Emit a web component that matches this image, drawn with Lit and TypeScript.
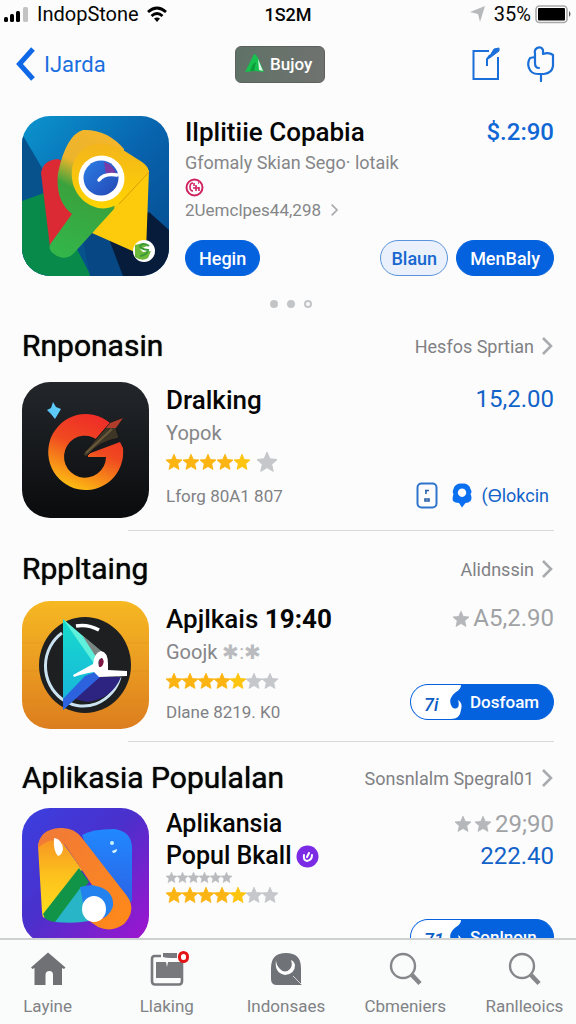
import { LitElement, html, css, nothing, TemplateResult } from "lit";
import { customElement, property } from "lit/decorators.js";
import { classMap } from "lit/directives/class-map.js";

const reset = css`
  * { box-sizing: border-box; }
  svg { display: block; flex: none; }
  button {
    font: inherit; color: inherit; background: none; border: 0; padding: 0; margin: 0;
    cursor: pointer;
  }
  a { color: inherit; text-decoration: none; }
  h1, h2, h3, p { margin: 0; font-weight: inherit; font-size: inherit; }
`;

const STAR = "M10 .8 12.700 7l6.800.600-5.100 4.500 1.500 6.700L10 15.300l-5.900 3.500 1.500-6.700L.5 7.600 7.300 7z";

const star = (color: string, size: number) => html`
  <svg width=${size} height=${size} viewBox="0.5 0.5 19 19" aria-hidden="true"><path fill=${color} stroke=${color} stroke-width="1" stroke-linejoin="round" d=${STAR} /></svg>`;

const chevron = (size: number) => html`
  <svg width=${size} height=${size} viewBox="0 0 18 18" aria-hidden="true">
    <path d="M7 1l8 8-8 8" fill="none" stroke="#a9abae" stroke-width="2.600" />
  </svg>`;

const searchArt = html`
  <svg width="36" height="36" viewBox="0 0 36 36" fill="none" stroke="#85878a" aria-hidden="true">
    <circle cx="16" cy="15" r="12" stroke-width="2.400" />
    <path d="M25 24l8 8.500" stroke-width="4.500" />
  </svg>`;

const compassArt = html`
  <svg viewBox="0 0 147 160" width="147" height="160" aria-hidden="true">
    <defs>
      <linearGradient id="sky" x1="0" y1="0" x2="1" y2="1"><stop offset="0" stop-color="#0b95cf" /><stop offset=".5" stop-color="#0863ad" /><stop offset="1" stop-color="#054a8c" /></linearGradient>
      <linearGradient id="gold" x1="0" y1="0" x2="0" y2="1"><stop offset="0" stop-color="#f3b41c" /><stop offset="1" stop-color="#ffd500" /></linearGradient>
      <linearGradient id="leaf" x1="0.600" y1="0" x2="0.300" y2="1"><stop offset="0" stop-color="#f3b52c" /><stop offset=".3" stop-color="#ebb42c" /><stop offset=".5" stop-color="#3aa23d" /><stop offset="1" stop-color="#33b54a" /></linearGradient>
      <linearGradient id="blue" x1="0" y1="0" x2="1" y2="1"><stop offset="0" stop-color="#2a7de6" /><stop offset="1" stop-color="#2548b4" /></linearGradient>
    </defs>
    <rect width="147" height="160" fill="url(#sky)" />
    <path d="M0 18l26 44 60 98H0z" fill="#07528c" />
    <path d="M0 85l25-9 44 84H0z" fill="#078a4a" />
    <path d="M60 120l42-20 10 60H68z" fill="#074884" />
    <path d="M85 118l42-22 20 18v46h-46z" fill="#071c3a" />
    <path d="M19 57q2-13 17-14l20 10 10 60-38 18z" fill="#dc2a35" />
    <path d="M127 54l-3 82q-4 4-9 1L70 117l28-36z" fill="#fdcb0b" />
    <path d="M61 14q24-1 41 19L92 93 52 137q-9 9-20 1-7-5-3-11l21-29Q33 85 36 57 44 19 61 14z" fill="url(#leaf)" />
    <path d="M127 56q-1-6-7-10L98 32Q75 22 60 34 46 48 51 68q6 19 25 24 12 2 21-5z" fill="url(#gold)" />
    <path d="M127 56L97 88" stroke="#d99d06" stroke-width="1" />
    <circle cx="79.500" cy="62.500" r="23" fill="#fff" />
    <circle cx="79" cy="62" r="17.500" fill="url(#blue)" />
    <path d="M82 46q9 2 12 12l-10 1z" fill="#793ba6" />
    <path d="M77 64q5-7 18-5" fill="none" stroke="#fff" stroke-width="3.500" stroke-linecap="round" />
    <circle cx="122" cy="135" r="11" fill="#fff" />
    <path d="M113 129l8-2 4 3-7 3 3 3 8-1-3 7q-6 4-13-1z" fill="#6cb83a" />
    <path d="M127 130q-6-4-9 0 0 3 8 4-1 5-8 6" fill="none" stroke="#3d9a38" stroke-width="2" />
  </svg>`;

const ringArt = html`
  <svg viewBox="0 0 127 136" width="127" height="136" aria-hidden="true">
    <defs>
      <linearGradient id="night" x1="0" y1="0" x2="0" y2="1"><stop offset="0" stop-color="#23272b" /><stop offset="1" stop-color="#0a0b0d" /></linearGradient>
      <linearGradient id="fire" x1="0.700" y1="0" x2="0.300" y2="1"><stop offset="0" stop-color="#ee2a28" /><stop offset=".45" stop-color="#f04a20" /><stop offset=".95" stop-color="#fcb813" /></linearGradient>
    </defs>
    <rect width="127" height="136" fill="url(#night)" />
    <path d="M31 20l3 5 5 2-3 5-3 5-4-5-4-4 4-2z" fill="#5cc9f7" />
    <path d="M91 44A37.500 38 0 1 0 101 66L98 60 66 72V75H84A21 21 0 1 1 78 60z" fill="url(#fire)" />
    <path d="M61 72L88 41l13-5-7 10 3 10Q76 60 66 73q-3 3-5-1z" fill="#3d3526" stroke="#16161a" stroke-width="1" />
    <path d="M88 41l13-5-7 10-10 0z" fill="#b03c2c" />
    <path d="M64 71l26-24" fill="none" stroke="#6b5a3a" stroke-width="2" />
  </svg>`;

const playArt = html`
  <svg viewBox="0 0 127 128" width="127" height="128" aria-hidden="true">
    <defs>
      <linearGradient id="wood" x1="0" y1="0" x2="0" y2="1"><stop offset="0" stop-color="#f6b822" /><stop offset=".5" stop-color="#ea9c22" /><stop offset="1" stop-color="#dc7d1e" /></linearGradient>
      <linearGradient id="teal" x1="0" y1="0" x2="0" y2="1"><stop offset="0" stop-color="#17dccc" /><stop offset="1" stop-color="#18b0dc" /></linearGradient>
    </defs>
    <rect width="127" height="128" fill="url(#wood)" />
    <path d="M0 42h127M0 70h127M0 100h127" stroke="#d98918" stroke-width="1" opacity=".35" />
    <ellipse cx="63" cy="64" rx="46" ry="48" fill="#1d1f21" />
    <path d="M40 32a38 40 0 1 0 58 44" fill="none" stroke="#cbe3f1" stroke-width="3" />
    <path d="M54 25q12-2 23 4" fill="none" stroke="#fff" stroke-width="3.500" />
    <path d="M66 76h33q-9 22-34 25l-16-4z" fill="#2c2480" />
    <path d="M41 18v91l35-33 4-22z" fill="url(#teal)" />
    <path d="M41 18l40 34-10 9z" fill="#5ff0dc" />
    <path d="M60 34l24 20-10 2z" fill="#7a8582" />
    <path d="M41 109V98l22-23 10-4 5 5z" fill="#2d62df" />
    <path fill-rule="evenodd" d="M51 74L71 63q1-11 8-13 7 1 7 13v6l19 1v5l-28 1-5-5q-12 2-20 5zM77 66q6-3 3-9-5 1-3 9z" fill="#fff" />
    <path d="M77 66q-2-8 3-9 4 4-1 9z" fill="#7b1842" />
  </svg>`;

const ribbonArt = html`
  <svg viewBox="0 0 127 136" width="127" height="136" aria-hidden="true">
    <defs>
      <linearGradient id="violet" x1="0" y1="0" x2="1" y2="1"><stop offset="0" stop-color="#3b3fe0" /><stop offset=".45" stop-color="#4a30cc" /><stop offset="1" stop-color="#a313cf" /></linearGradient>
      <linearGradient id="orange" x1="0" y1="0" x2="1" y2="1"><stop offset="0" stop-color="#f0793a" /><stop offset="1" stop-color="#ff8a17" /></linearGradient>
      <linearGradient id="azure" x1="0" y1="0" x2="0" y2="1"><stop offset="0" stop-color="#2188ff" /><stop offset="1" stop-color="#2b62e4" /></linearGradient>
      <linearGradient id="sun" x1="0" y1="0" x2="0" y2="1"><stop offset="0" stop-color="#f58a25" /><stop offset=".5" stop-color="#fcc01d" /><stop offset="1" stop-color="#ffdf1b" /></linearGradient>
    </defs>
    <rect width="127" height="136" fill="url(#violet)" />
    <path d="M60 27q10-6 32-6 17 2 18 18v54l-6 4-40-60z" fill="url(#azure)" />
    <path d="M16 38q2-14 16-16l28 40-38 48q-2-2-2-6z" fill="url(#sun)" />
    <path d="M21 106L57 60l10 14-32 40q-12 0-14-8z" fill="#119447" />
    <path d="M33 114l26-35h16l-8 34q-14 3-34 1z" fill="#28b5c8" />
    <path d="M58 79q22-6 32 6 6 12-2 24l-24 2z" fill="#2482ee" />
    <path d="M16 40Q17 21 38 20q14-1 22 10l45 58q10 14-3 28-12 9-26 3l-10-7q20 2 25-14 1-14-13-19l-8-2L43 37q-12-11-27 3z" fill="url(#orange)" />
    <path d="M32 30q8 1 9 11-1 6-5 7-5-5-4-18z" fill="#fff" />
    <ellipse cx="72" cy="101" rx="12" ry="13" fill="#fff" />
    <circle cx="90" cy="35" r="2" fill="#c8f2ff" />
    <path d="M90 43l5-2q0 4-4 4z" fill="#d8f6ff" />
  </svg>`;

@customElement("app-rating")
class AppRating extends LitElement {
  @property({ type: Number }) filled = 5;
  @property({ type: Number }) total = 7;
  @property({ type: Boolean }) spaced = false;

  static styles = css`
    :host { display: flex; align-items: center; }
    svg { display: block; }
    .wide { padding-right: 1px; }
    .apart { margin-left: 6px; }
  `;

  render() {
    return Array.from({ length: this.total }, (_, i) => {
      const on = i < this.filled;
      const apart = this.spaced && i === this.filled;
      return html`<span class=${classMap({ apart, wide: this.spaced })}>${star(on ? (i > 3 ? "#fdc50f" : "#fbb411") : "#c5c7ca", apart ? 20 : 16)}</span>`;
    });
  }
}

@customElement("split-button")
class SplitButton extends LitElement {
  @property() label = "";
  @property() mark = "";

  static styles = [reset, css`
    :host { display: block; }
    button {
      display: flex; align-items: center; width: 144px; height: 36px; border-radius: 18px;
      border: 1px solid #0562de; background: #0562de; overflow: hidden; color: #fff;
      font-size: 17px; font-weight: 500;
    }
    .left {
      display: grid; align-items: center; justify-items: start; height: 34px; flex: none;
      margin-right: 8px; color: #0b5cc4; font-style: italic;
    }
    .left > * { grid-area: 1 / 1; }
    .mark { padding-left: 13px; padding-top: 4px; font-size: 18px; }
  `];

  render() {
    return html`
      <button type="button">
        <span class="left">
          <svg width="51" height="34" viewBox="0 0 51 34" aria-hidden="true">
            <path d="M0 0h50q0 4-5 7-8 6-5 13 2 5 6 3 3-2 1-8 5 3 3 10-1 9-10 9H0z" fill="#fff" />
          </svg>
          <span class="mark">${this.mark}</span>
        </span>
        ${this.label}
      </button>`;
  }
}

interface Shelf {
  heading: string;
  more: string;
  art: TemplateResult;
  kind: string;
  body: TemplateResult;
  side: TemplateResult;
}

const shelves: Shelf[] = [
  {
    heading: "Rnponasin",
    more: "Hesfos Sprtian",
    art: ringArt,
    kind: "roomy",
    body: html`
      <h3 class="name">Dralking</h3>
      <p class="sub">Yopok</p>
      <app-rating class="rating" filled="5" total="6" spaced></app-rating>
      <p class="meta">Lforg 80A1 807</p>`,
    side: html`
      <p class="price">15,2.00</p>
      <div class="links">
        <svg width="22" height="27" viewBox="0 0 22 27" fill="none" aria-hidden="true">
          <rect x="1.500" y="1.500" width="19" height="24" rx="4" stroke="#2f74cc" stroke-width="2" />
          <path d="M9 8.500h4M10 8v4M9 17h4v2H9z" stroke="#2a5fa8" stroke-width="1.600" />
        </svg>
        <svg width="20" height="25" viewBox="0 0 20 25" aria-hidden="true">
          <path fill="#0b70f0" fill-rule="evenodd" d="M10 .5Q17 0 18.500 6q2 3 0 5 2 4 0 7-2 2-5 2l-3.500 4.500L7 20q-4 0-6-2-1-3 0.500-7-1.500-2 0-5Q3 0 10 .5zM10 5.500a4.200 4.200 0 1 0 .1 0z" />
        </svg>
        <a href="#lokasi">(Ɵlokcin</a>
      </div>`,
  },
  {
    heading: "Rppltaing",
    more: "Alidnssin",
    art: playArt,
    kind: "",
    body: html`
      <h3 class="name">Apjlkais <b>19:40</b></h3>
      <p class="sub">Goojk <span class="faint">✱:✱</span></p>
      <app-rating class="rating" filled="5" total="7"></app-rating>
      <p class="meta">Dlane 8219. K0</p>`,
    side: html`
      <p class="price muted">${star("#b5b7ba", 16)} A5,2.90</p>
      <split-button mark="7i" label="Dosfoam"></split-button>`,
  },
  {
    heading: "Aplikasia Populalan",
    more: "Sonsnlalm Spegral01",
    art: ribbonArt,
    kind: "tall",
    body: html`
      <h3 class="name two">Aplikansia<br />
        <span class="verified">Popul Bkall
          <svg width="23" height="23" viewBox="0 0 23 23" aria-hidden="true">
            <circle cx="11.500" cy="11.500" r="11" fill="#7b2be3" />
            <path d="M8 10q-1 5 3 6 5-1 5-6M11 12l2-4" fill="none" stroke="#fff" stroke-width="2" stroke-linecap="round" />
          </svg></span>
      </h3>
      <p class="tiny">${Array.from({ length: 6 }, () => star("#b9bbbe", 11))}</p>
      <app-rating class="rating" filled="5" total="7"></app-rating>`,
    side: html`
      <div>
        <p class="price muted">${star("#b5b7ba", 16)}${star("#b5b7ba", 16)} 29;90</p>
        <p class="price">222.40</p>
      </div>
      <split-button mark="71" label="Sonlnoın"></split-button>`,
  },
];

const tabs: { label: string; art: TemplateResult; alert?: boolean }[] = [
  {
    label: "Layine",
    art: html`<svg width="36" height="36" viewBox="0 0 36 36" aria-hidden="true">
      <path fill="#6f7174" d="M18 1.500l17.500 15-1.500 1.500-2-1V34h-9V24q0-4-3.500-4-4 0-4 4v10H4.500V17l-2 1L1 16.500z" /></svg>`,
  },
  {
    label: "Llaking",
    alert: true,
    art: html`<svg width="36" height="36" viewBox="0 0 36 36" aria-hidden="true">
      <path fill="none" stroke="#77797c" stroke-width="2.600" d="M12 5H5.500Q3 5 3 8v22q0 3.500 3 3.500h24q3 0 3-3.500V10" />
      <path fill="#77797c" d="M14 2h14v5h-6q-5 0-8-1zM7 11h10l1 5 1-5h13v16H7z" /></svg>`,
  },
  {
    label: "Indonsaes",
    art: html`<svg width="36" height="36" viewBox="0 0 36 36" aria-hidden="true">
      <path fill="#6f7276" d="M3 17Q3 2 18 2t15 15v17H9q-6 0-6-6z" />
      <path fill="#fff" d="M8 9Q6 22 17 24q10-1 10-10-1-4-4-5 2 6-1 9-5 5-10 0-4-4-4-9z" />
      <path stroke="#d0d1d2" stroke-width="1" d="M25 25l9 9" /></svg>`,
  },
  { label: "Cbmeniers", art: searchArt },
  { label: "Ranlleoics", art: searchArt },
];

@customElement("app-root")
class AppRoot extends LitElement {
  static styles = [reset, css`
    :host {
      display: flex; flex-direction: column; height: 100vh; overflow: hidden;
      background: #fcfcfc; color: #060606;
      font-family: Roboto, "Liberation Sans", sans-serif; font-size: 18px;
    }
    .status {
      display: grid; grid-template-columns: 1fr auto 1fr; align-items: center; flex: none;
      height: 28px; padding: 0 4px; font-size: 20px;
    }
    .status > div { display: flex; align-items: center; gap: 8px; }
    .status .right { justify-content: flex-end; gap: 4px; }
    .status .clock { font-weight: 500; font-size: 18px; }
    .arrow { margin-right: 4px; }
    .nav {
      display: grid; grid-template-columns: 1fr auto 1fr; align-items: center; flex: none;
      height: 72px; padding: 0 20px 0 16px;
    }
    .back { display: flex; align-items: center; gap: 8px; color: #1a6fe0; font-size: 22px; justify-self: start; }
    .promo {
      display: flex; align-items: center; gap: 6px; height: 37px; width: 90px; padding-left: 9px;
      margin-right: 12px; border-radius: 6px; border: 1px solid #5d625f;
      background: linear-gradient(100deg, #5f7266, #707270);
      color: #fff; font-size: 17px; font-weight: 500;
    }
    .tools { display: flex; gap: 27px; justify-content: flex-end; }
    main { flex: 1; min-height: 0; overflow: hidden; padding: 16px 22px 0; }
    .hero { display: flex; gap: 16px; }
    .icon { display: block; flex: none; overflow: hidden; border-radius: 28px; align-self: flex-start; }
    .info { flex: 1; min-width: 0; display: flex; flex-direction: column; }
    .top { display: flex; justify-content: space-between; align-items: center; height: 32px; }
    .top h1 { font-size: 26px; font-weight: 500; white-space: nowrap; }
    .cost { font-size: 24px; font-weight: 500; color: #0f66d4; }
    .line { display: flex; align-items: center; gap: 6px; height: 28px; color: #858688; font-size: 18px; }
    .seal { display: flex; align-items: center; height: 22px; }
    .line.low { height: 24px; font-size: 17px; }
    .actions { display: flex; gap: 8px; margin-top: auto; align-items: center; }
    .pill {
      height: 36px; border-radius: 18px; border: 1px solid #0562de; background: #0562de; color: #fff;
      padding: 0 13px; font-size: 18px; font-weight: 500;
    }
    .pill.pale { background: #eaf1fc; color: #1767cf; border-color: #5a93d8; padding: 0 10px; }
    .grow { flex: 1; }
    .dots { display: flex; justify-content: center; align-items: center; gap: 9px; height: 52px; padding: 4px 0 0 6px; }
    .dots i { width: 8px; height: 8px; border-radius: 50%; background: #c3c4c6; }
    .dots .ring { background: none; border: 2px solid #c3c4c6; }
    .head { display: flex; justify-content: space-between; align-items: center; height: 36px; margin-bottom: 14px; }
    .roomy .head { margin-bottom: 18px; }
    .tall .head { height: 32px; }
    .head h2 { font-size: 30px; font-weight: 400; line-height: 36px; white-space: nowrap; -webkit-text-stroke: 1px transparent; text-shadow: 0 0 1px #060606; }
    .more { display: flex; align-items: center; font-size: 18px; gap: 2px; color: #808184; white-space: nowrap; }
    .row { display: flex; gap: 17px; }
    .tall .row { min-height: 156px; }
    .text { flex: 1; min-width: 0; }
    .rule { height: 1px; background: #d8d9db; margin: 12px 0 20px 106px; }
    .name { font-size: 26px; line-height: 36px; font-weight: 500; white-space: nowrap; }
    .name b { font-weight: 700; }
    .name.two { font-size: 25px; line-height: 32px; }
    .verified { display: flex; align-items: center; gap: 4px; }
    .sub { font-size: 20px; line-height: 30px; color: #858688; }
    .faint { color: #b9bbbe; }
    .rating { height: 28px; }
    .tall .rating { height: 26px; }
    .meta { font-size: 17px; line-height: 34px; color: #808184; }
    .roomy .meta { line-height: 40px; }
    .tiny { display: flex; height: 10px; align-items: center; }
    .side { display: flex; flex-direction: column; justify-content: space-between; align-items: flex-end; padding-bottom: 9px; }
    .price { display: flex; align-items: center; justify-content: flex-end; gap: 4px; font-size: 24px; line-height: 35px; color: #1263c9; }
    .price.muted { color: #a0a2a5; }
    .tall .price { line-height: 32px; }
    .links { display: flex; align-items: center; gap: 14px; color: #1263c9; font-size: 18px; height: 27px; padding-right: 5px; }
    .links a { margin-left: -4px; }
    .tabbar { flex: none; border-top: 2px solid #cfd0d2; background: #fafbfb; overflow: hidden; }
    .tabs { display: grid; grid-template-columns: repeat(5, 1fr); margin: 0 -8px 0 -12px; height: 84px; }
    .tab { display: flex; flex-direction: column; align-items: center; gap: 8px; padding-top: 11px; font-size: 17px; line-height: 22px; color: #808285; }
    .glyph { position: relative; }
    .alert { position: absolute; top: 0; right: -4px; width: 11px; height: 12px; border-radius: 6px; border: 3px solid #e51515; background: #fff; }
  `];

  render() {
    return html`
      <div class="status">
        <div>
          <svg width="25" height="18" viewBox="0 0 25 18" aria-hidden="true">
            <rect x="0" y="12" width="4" height="5" rx="1.500" /><rect x="6" y="9" width="4" height="8" rx="1.500" />
            <rect x="12" y="6" width="4" height="11" rx="1.500" /><rect x="19" y="2" width="5" height="15" rx="1.500" fill="#c3c3c3" />
          </svg>
          <span>IndopStone</span>
          <svg width="20" height="18" viewBox="0 0 20 18" fill="none" stroke="#000" stroke-width="2.800" aria-hidden="true">
            <path d="M1 7q9-8 18 0M4.500 11q5.500-5 11 0" /><path d="M7 13.500q3-2 6 0L10 17z" fill="#000" stroke="none" />
          </svg>
        </div>
        <div class="clock">1S2M</div>
        <div class="right">
          <svg class="arrow" width="16" height="18" viewBox="0 0 16 18" aria-hidden="true"><path d="M0 7L15 1 10 17 8 9z" fill="#b7b9ba" /></svg>
          <span>35%</span>
          <svg width="37" height="19" viewBox="0 0 37 19" aria-hidden="true">
            <rect x="1" y="1" width="31" height="16.500" rx="3.500" fill="#fff" stroke="#a8a9aa" stroke-width="1.600" />
            <rect x="3" y="3" width="27" height="12.500" rx="1" fill="#000" /><path d="M34 6q3 3 0 6z" fill="#555" />
          </svg>
        </div>
      </div>

      <nav class="nav">
        <a class="back" href="#kembali">
          <svg width="20" height="34" viewBox="0 0 20 34" aria-hidden="true"><path d="M17 2L3.500 17 17 32" fill="none" stroke="#0f69e6" stroke-width="5" /></svg>
          IJarda
        </a>
        <button class="promo" type="button">
          <svg width="19" height="20" viewBox="0 0 19 20" aria-hidden="true">
            <path d="M0 18L9 0q2 0 4 4l6 14-9-1z" fill="#18c04e" /><path d="M13 5l5 12-4-1z" fill="#dff8e6" /><path d="M8 10l3-2-2 9H5z" fill="#0c9c3a" />
          </svg>
          Bujoy
        </button>
        <div class="tools">
          <button type="button" aria-label="Tulis">
            <svg width="28" height="36" viewBox="0 0 28 36" fill="none" stroke="#1a6fd8" stroke-width="2" aria-hidden="true">
              <path d="M17 5H1.500v28H26V11" /><path d="M15 20V13l3-4" /><path d="M16 13l6-10 5-1 0 3-8 6z" fill="#1a6fd8" stroke-width="1" />
            </svg>
          </button>
          <button type="button" aria-label="Suka">
            <svg width="29" height="36" viewBox="0 0 29 36" fill="none" stroke="#1a6fd8" stroke-width="2.200" stroke-linejoin="round" stroke-linecap="round" aria-hidden="true">
              <path d="M8 11l-5 1q-3 5-1 10 2 6 9 6h6q8-1 9-8V9q-4-3-10-1V4q-2-4-6-2-3 2-2 5v10q0 5 4 5M14 29v6" />
            </svg>
          </button>
        </div>
      </nav>

      <main>
        <section class="hero">
          <span class="icon">${compassArt}</span>
          <div class="info">
            <div class="top"><h1>Ilplitiie Copabia</h1><span class="cost">$.2:90</span></div>
            <p class="line">Gfomaly Skian Sego· lotaik</p>
            <span class="seal">
              <svg width="19" height="19" viewBox="0 0 19 19" fill="none" stroke="#cf2360" stroke-width="2" aria-hidden="true">
                <circle cx="9.500" cy="9.500" r="8" /><path d="M8 5q-3 0-3 4t3 4M9 5v3M11 7v6M8 10h6M14 9v4M13 5h1" stroke-width="1.600" />
              </svg>
            </span>
            <a class="line low" href="#ulasan">2Uemclpes44,298 ${chevron(12)}</a>
            <div class="actions">
              <button class="pill" type="button">Hegin</button>
              <span class="grow"></span>
              <button class="pill pale" type="button">Blaun</button>
              <button class="pill" type="button">MenBaly</button>
            </div>
          </div>
        </section>
        <div class="dots"><i></i><i></i><i class="ring"></i></div>

        ${shelves.map((s, i) => html`
          ${i ? html`<div class="rule"></div>` : nothing}
          <section class=${s.kind}>
            <div class="head">
              <h2>${s.heading}</h2>
              <a class="more" href="#semua">${s.more} ${chevron(18)}</a>
            </div>
            <div class="row">
              <span class="icon">${s.art}</span>
              <div class="text">${s.body}</div>
              <div class="side">${s.side}</div>
            </div>
          </section>`)}
      </main>

      <footer class="tabbar">
        <nav class="tabs">
          ${tabs.map((t) => html`
            <a class="tab" href="#tab">
              <span class="glyph">${t.art}${t.alert ? html`<span class="alert"></span>` : nothing}</span>
              ${t.label}
            </a>`)}
        </nav>
      </footer>`;
  }
}
